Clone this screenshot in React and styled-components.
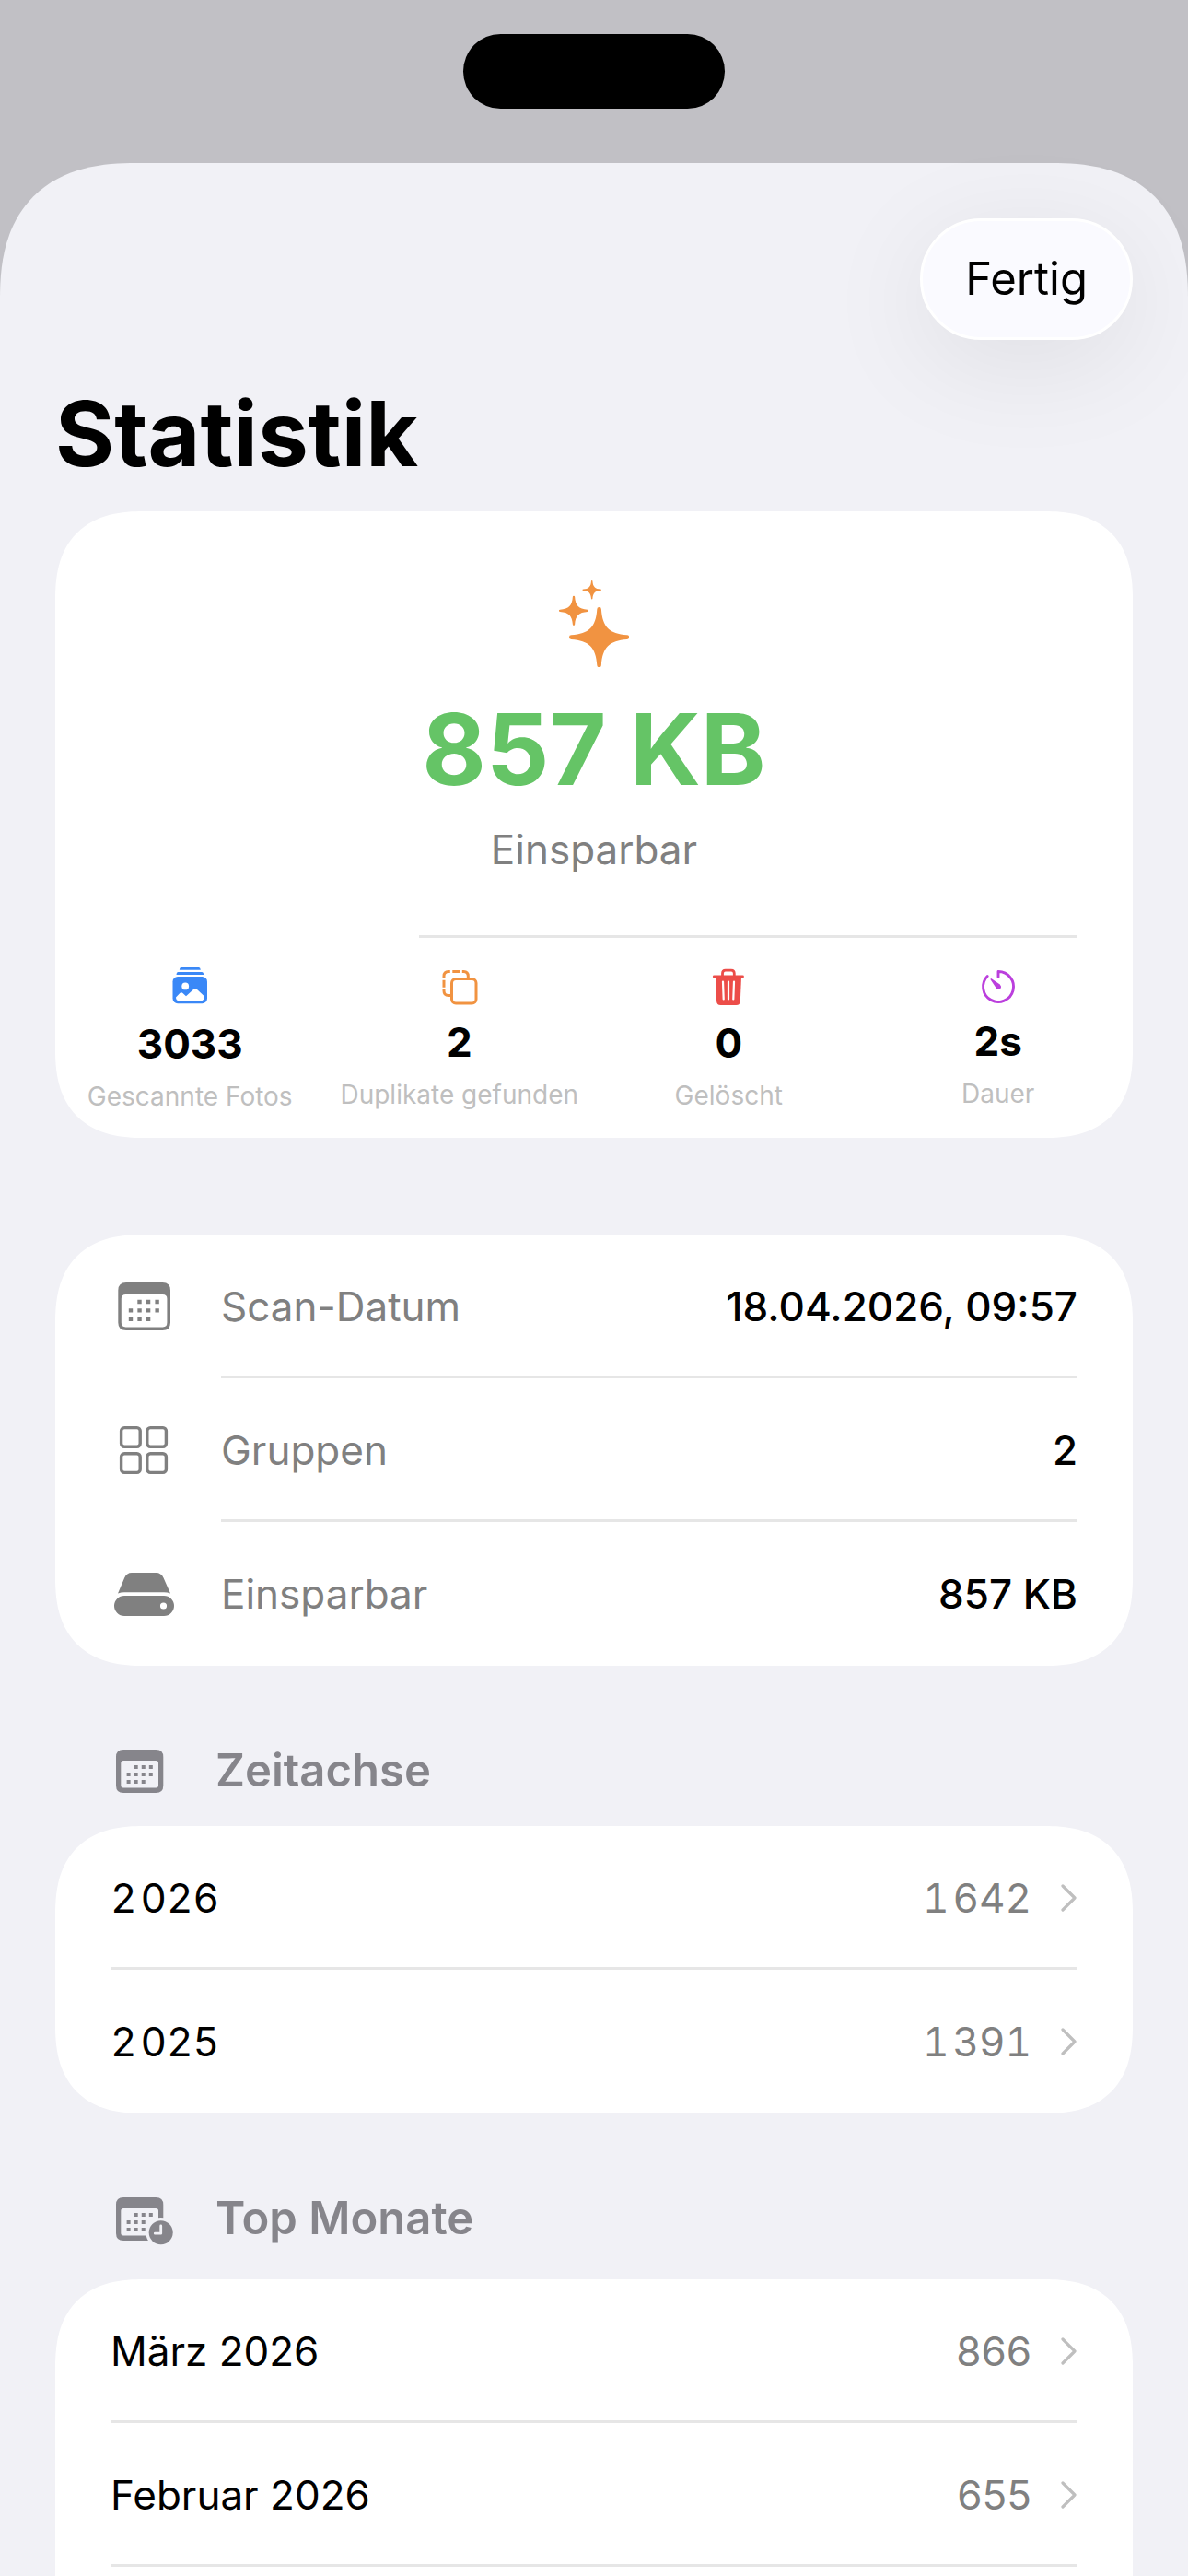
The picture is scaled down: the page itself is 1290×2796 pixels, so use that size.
import React from 'react';
import styled, { createGlobalStyle } from 'styled-components';

const GlobalStyle = createGlobalStyle`
    * {
        box-sizing: border-box;
    }

    body {
        margin: 0;
        background: #c1c0c5;
        color: #000;
        font-family: 'Inter', 'Liberation Sans', sans-serif;
    }
`;

const Screen = styled.div`
    display: flex;
    flex-direction: column;
    min-height: 100vh;
`;

const StatusBar = styled.div`
    display: flex;
    justify-content: center;
    padding: 37px 0 59px;
`;

const Island = styled.div`
    width: 284px;
    height: 81px;
    border-radius: 41px;
    background: #000;
`;

const Sheet = styled.main`
    flex: 1;
    display: flex;
    flex-direction: column;
    padding: 60px 60px 0;
    border-radius: 116px 116px 0 0;
    background: #f1f1f6;

    @supports (corner-shape: superellipse(1.3)) {
        border-radius: 148px 148px 0 0;
        corner-shape: superellipse(1.3);
    }
`;

const Toolbar = styled.div`
    display: flex;
    justify-content: flex-end;
`;

const DoneButton = styled.button`
    height: 132px;
    padding: 0 46px;
    border: 3px solid #fff;
    border-radius: 66px;
    background: #fafaff;
    box-shadow: 0 24px 120px rgba(0, 0, 0, 0.08);
    color: #000;
    font-family: inherit;
    font-size: 49px;
    line-height: 60px;
`;

const Title = styled.h1`
    margin: 42px 0 24px;
    font-size: 98px;
    font-weight: 700;
    line-height: 120px;
`;

const Card = styled.section`
    overflow: hidden;
    border-radius: 78px;
    background: #fff;

    @supports (corner-shape: superellipse(1.3)) {
        border-radius: 96px;
        corner-shape: superellipse(1.3);
    }
`;

const InfoCard = styled(Card)`
    margin-top: 105px;
`;

/* runs on past the bottom edge of the screen */
const OpenCard = styled(Card)`
    flex: 1;
    border-bottom-left-radius: 0;
    border-bottom-right-radius: 0;
`;

const Hero = styled.div`
    display: flex;
    flex-direction: column;
    align-items: center;
    padding: 75px 0 63px;
`;

const HeroValue = styled.div`
    margin-top: 29px;
    color: #65c466;
    font-size: 107px;
    font-weight: 700;
    line-height: 120px;
`;

const HeroLabel = styled.div`
    margin-top: 19px;
    color: #808080;
    font-size: 44px;
    line-height: 60px;
`;

const HeroDivider = styled.hr`
    height: 3px;
    margin: 0 60px 0 395px;
    border: 0;
    background: #e6e6e6;
`;

const Stats = styled.div`
    display: grid;
    grid-template-columns: repeat(4, 1fr);
    padding: 32px 0 27px;
`;

const Stat = styled.div`
    display: flex;
    flex-direction: column;
    align-items: center;
    gap: 12px;
`;

const StatValue = styled.div`
    font-size: 44px;
    font-weight: 700;
    line-height: 54px;
`;

const StatLabel = styled.div`
    color: #bfbfbf;
    font-size: 28px;
    line-height: 36px;
    white-space: nowrap;
`;

const InfoList = styled.dl`
    margin: 0;
`;

const InfoRow = styled.div`
    display: flex;
    align-items: center;
    gap: 48px;
    padding: 0 60px;
    color: #808080;
`;

const RowBody = styled.div`
    flex: 1;
    display: flex;
    align-items: center;
    justify-content: space-between;
    height: 156px;
    padding-top: 3px;
    border-bottom: 3px solid ${props => (props.$last ? 'transparent' : '#e6e6e6')};
    font-size: 44px;
    line-height: 60px;
    font-variant-numeric: ${props => (props.$tabular ? 'tabular-nums' : 'normal')};
`;

const InfoValue = styled.dd`
    margin: 0;
    color: #000;
    font-weight: 500;
`;

const SectionHeader = styled.h2`
    display: flex;
    align-items: flex-start;
    gap: 42px;
    margin: 0;
    padding: 84px 60px 30px;
    color: #86858b;
    font-size: 49px;
    font-weight: 600;
    line-height: 60px;
`;

const LinkRow = styled.a`
    display: block;
    padding: 0 60px;
    color: #000;
    text-decoration: none;
`;

const LinkValue = styled.span`
    display: flex;
    align-items: center;
    gap: 32px;
    color: #808080;
`;

const Star = ({ x, y, size }) => (
    <path
        transform={`translate(${x} ${y}) scale(${size / 32.5})`}
        d="M-2.3-30.4C-3.6-11-11-3.6-30.4-2.3A2.3 2.3 0 0 0-30.4 2.3C-11 3.6-3.6 11-2.3 30.4A2.3 2.3 0 0 0 2.3 30.4C3.6 11 11 3.6 30.4 2.3A2.3 2.3 0 0 0 30.4-2.3C11-3.6 3.6-11 2.3-30.4A2.3 2.3 0 0 0-2.3-30.4Z"
    />
);

const SparklesIcon = () => (
    <svg width="76" height="94" viewBox="0 0 76 94" fill="#f19341" aria-hidden="true">
        <Star x={43.6} y={61.6} size={32.4} />
        <Star x={16} y={32.8} size={16} />
        <Star x={35.7} y={10.3} size={10.2} />
    </svg>
);

const PhotosIcon = () => (
    <svg width="48" height="44" viewBox="0 0 48 44" fill="#3a88f7" aria-hidden="true">
        <path d="M14.5 0h19.5q1.5 0 1.8 2.7H12.8Q13 0 14.5 0Z" />
        <path d="M11.5 5h25.5q2 0 2.2 3H9.5q.2-3 2-3Z" />
        <rect x="5.5" y="10" width="37.5" height="29.2" rx="5.5" />
        <circle cx="19.2" cy="20.4" r="3.9" fill="#fff" />
        <path fill="#fff" d="M9 32.5L13.3 28q1.6-1.7 3.2 0L20 31.3 28 24q2-1.8 4 0L39.5 31v1.8q0 3.4-3.4 3.4H12.4Q9 36.2 9 32.5Z" />
    </svg>
);

const DuplicateIcon = () => (
    <svg width="48" height="42" viewBox="0 0 48 42" fill="none" stroke="#f19341" strokeWidth="3" aria-hidden="true">
        <rect x="15.5" y="12.5" width="26.5" height="26.5" rx="4.5" />
        <path d="M7 11V9.5Q7 4.500 12 4.500H13.8M16.3 4.500H24.3M26.8 4.500H28.5Q33.3 4.500 33.3 9.5V11M7 13.7V21.7M7 24V25.5Q7 30.5 12 30.5H14" />
    </svg>
);

const TrashIcon = () => (
    <svg width="48" height="43" viewBox="0 0 48 43" fill="#ec4d49" aria-hidden="true">
        <path d="M17.5 9.5V6.5Q17.5 3.2 20.8 3.2H27Q30.3 3.2 30.3 6.5V9.5" fill="none" stroke="#ec4d49" strokeWidth="2.8" />
        <rect x="6.9" y="8.6" width="34" height="2.8" rx="1.4" />
        <path d="M10 10.5H38L36.8 36.8Q36.6 41 32.4 41H15.5Q11.3 41 11.1 36.8Z" />
        <path d="M18 15.5L18.7 34.5M24 15.5V34.5M30 15.5L29.3 34.5" stroke="#fff" strokeWidth="2.2" strokeLinecap="round" />
    </svg>
);

const TimerIcon = () => (
    <svg width="48" height="41" viewBox="0 0 48 41" fill="none" stroke="#bb3fdd" strokeWidth="2.9" strokeLinecap="round" aria-hidden="true">
        <path d="M24 10.5V4.500A16.5 16.5 0 1 1 12.2 9.5" strokeLinejoin="round" />
        <path d="M15.8 12.2Q16.3 11.8 17 12.4L25.8 18.5Q27.8 20.5 26.4 22.9 23.8 24.9 21.7 22.6L15.7 13.5Q15.2 12.7 15.8 12.2Z" fill="#bb3fdd" stroke="none" />
    </svg>
);

const CalendarIcon = () => (
    <svg width="72" height="60" viewBox="0 0 72 60" fill="currentColor" aria-hidden="true">
        <path fillRule="evenodd" d="M17 4H56.5Q65 4 65 12.5V47.5Q65 56 56.5 56H17Q8.3 56 8.3 47.5V12.5Q8.3 4 17 4ZM16.5 17Q11.8 17 11.8 21.5V47.5Q11.8 52.4 16.5 52.4H56.7Q61.4 52.4 61.4 47.5V21.5Q61.4 17 56.7 17Z" />
        <path strokeWidth="4.4" stroke="currentColor" strokeDasharray="4.4 5.15" d="M29.3 25H53M19.8 34.4H53M19.8 43.7H43.3" />
    </svg>
);

const GridIcon = () => (
    <svg width="72" height="60" viewBox="0 0 72 60" fill="none" stroke="currentColor" strokeWidth="3.4" aria-hidden="true">
        <rect x="11.6" y="5.6" width="20.6" height="20.6" rx="3.5" />
        <rect x="39.8" y="5.6" width="20.6" height="20.6" rx="3.5" />
        <rect x="11.6" y="33.8" width="20.6" height="20.6" rx="3.5" />
        <rect x="39.8" y="33.8" width="20.6" height="20.6" rx="3.5" />
    </svg>
);

const DriveIcon = () => (
    <svg width="72" height="60" viewBox="0 0 72 60" fill="currentColor" aria-hidden="true">
        <path d="M8 29.6L15.2 12.5Q17.5 7 23 7H49.5Q55 7 57.5 12.5L65 29.6Q61.5 28.3 58 28.3H15Q11.5 28.3 8 29.6Z" />
        <path fillRule="evenodd" d="M15 32H58A11 11 0 0 1 58 54H15A11 11 0 0 1 15 32ZM57.5 39.4A3.6 3.6 0 1 0 57.5 46.6 3.6 3.6 0 1 0 57.5 39.4Z" />
    </svg>
);

const TimelineIcon = () => (
    <svg width="72" height="60" viewBox="0 0 72 60" fill="currentColor" aria-hidden="true">
        <path fillRule="evenodd" d="M14 7H49.3Q57.3 7 57.3 15V46Q57.3 54 49.3 54H14Q6 54 6 46V15Q6 7 14 7ZM14 19Q11.3 19 11.3 21.7V45.7Q11.3 48.4 14 48.4H49.3Q52 48.4 52 45.7V21.7Q52 19 49.3 19Z" />
        <path strokeWidth="4" stroke="currentColor" strokeDasharray="4 4.06" d="M25.7 26H46M17.6 34H46M17.6 42H38" />
    </svg>
);

const MonthsIcon = () => (
    <svg width="72" height="66" viewBox="0 0 72 66" fill="currentColor" aria-hidden="true">
        <path fillRule="evenodd" d="M14 7H49.3Q57.3 7 57.3 15V46Q57.3 54 49.3 54H14Q6 54 6 46V15Q6 7 14 7ZM14 19Q11.3 19 11.3 21.7V45.7Q11.3 48.4 14 48.4H49.3Q52 48.4 52 45.7V21.7Q52 19 49.3 19Z" />
        <path strokeWidth="4" stroke="currentColor" strokeDasharray="4 4.06" d="M25.7 26H46M17.6 34H38M17.6 42H38" />
        <circle cx="54.7" cy="45.3" r="16.3" fill="#f1f1f6" />
        <circle cx="54.7" cy="45.3" r="13" />
        <path d="M54.7 38V46.2H48.3" fill="none" stroke="#f1f1f6" strokeWidth="2.8" strokeLinecap="round" strokeLinejoin="round" />
    </svg>
);

const Chevron = () => (
    <svg width="18" height="32" viewBox="0 0 18 32" fill="none" stroke="#bfbfbf" strokeWidth="3.2" strokeLinecap="round" strokeLinejoin="round" aria-hidden="true">
        <path d="M2 3L15 16 2 29" />
    </svg>
);

const stats = [
    { icon: <PhotosIcon />, value: '3033', label: 'Gescannte Fotos' },
    { icon: <DuplicateIcon />, value: '2', label: 'Duplikate gefunden' },
    { icon: <TrashIcon />, value: '0', label: 'Gelöscht' },
    { icon: <TimerIcon />, value: '2s', label: 'Dauer' },
];

const details = [
    { icon: <CalendarIcon />, label: 'Scan-Datum', value: '18.04.2026, 09:57' },
    { icon: <GridIcon />, label: 'Gruppen', value: '2' },
    { icon: <DriveIcon />, label: 'Einsparbar', value: '857 KB' },
];

const years = [
    { label: '2\u200a026', value: '1\u200a642' },
    { label: '2\u200a025', value: '1\u200a391' },
];

const months = [
    { label: 'März 2026', value: '866' },
    { label: 'Februar 2026', value: '655' },
];

const Row = ({ label, value, last, tabular }) => (
    <LinkRow href="#">
        <RowBody $last={last} $tabular={tabular}>
            <span>{label}</span>
            <LinkValue>
                {value}
                <Chevron />
            </LinkValue>
        </RowBody>
    </LinkRow>
);

export default function App() {
    return (
        <Screen>
            <GlobalStyle />
            <StatusBar>
                <Island />
            </StatusBar>
            <Sheet>
                <Toolbar>
                    <DoneButton type="button">Fertig</DoneButton>
                </Toolbar>
                <Title>Statistik</Title>

                <Card>
                    <Hero>
                        <SparklesIcon />
                        <HeroValue>857 KB</HeroValue>
                        <HeroLabel>Einsparbar</HeroLabel>
                    </Hero>
                    <HeroDivider />
                    <Stats>
                        {stats.map(stat => (
                            <Stat key={stat.label}>
                                {stat.icon}
                                <StatValue>{stat.value}</StatValue>
                                <StatLabel>{stat.label}</StatLabel>
                            </Stat>
                        ))}
                    </Stats>
                </Card>

                <InfoCard>
                    <InfoList>
                        {details.map((item, i) => (
                            <InfoRow key={item.label}>
                                {item.icon}
                                <RowBody $last={i === details.length - 1}>
                                    <dt>{item.label}</dt>
                                    <InfoValue>{item.value}</InfoValue>
                                </RowBody>
                            </InfoRow>
                        ))}
                    </InfoList>
                </InfoCard>

                <SectionHeader>
                    <TimelineIcon />
                    Zeitachse
                </SectionHeader>
                <Card>
                    {years.map((year, i) => (
                        <Row key={year.label} {...year} tabular last={i === years.length - 1} />
                    ))}
                </Card>

                <SectionHeader>
                    <MonthsIcon />
                    Top Monate
                </SectionHeader>
                <OpenCard>
                    {months.map(month => (
                        <Row key={month.label} {...month} />
                    ))}
                </OpenCard>
            </Sheet>
        </Screen>
    );
}
